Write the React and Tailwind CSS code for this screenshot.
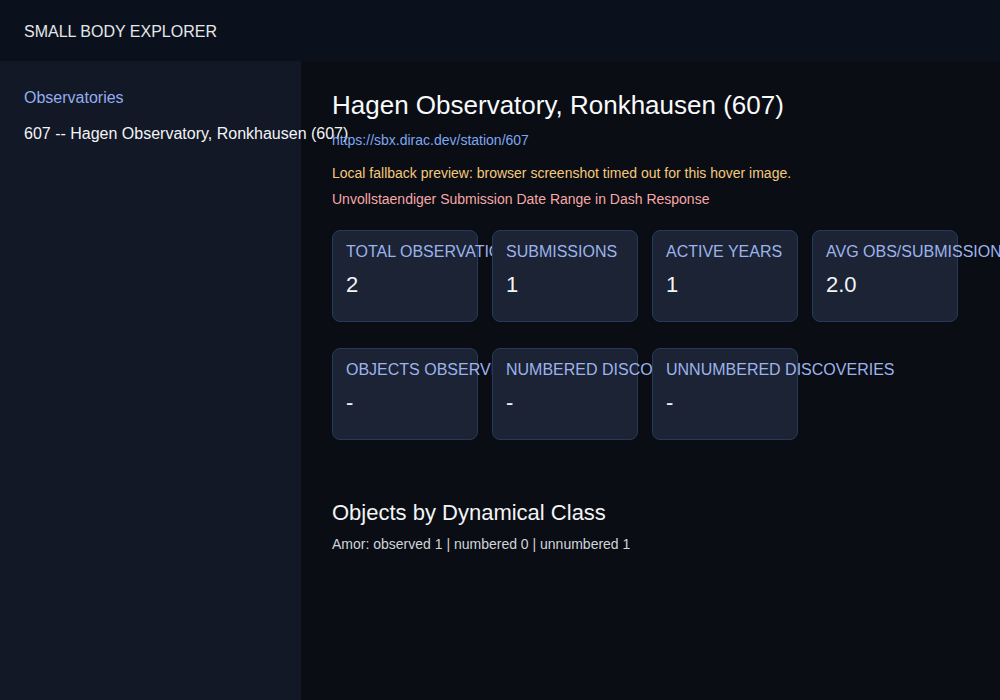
import React from 'react';

export default function App() {
  const row1 = [
    { label: 'TOTAL OBSERVATIONS', value: '2' },
    { label: 'SUBMISSIONS', value: '1' },
    { label: 'ACTIVE YEARS', value: '1' },
    { label: 'AVG OBS/SUBMISSION', value: '2.0' },
  ];
  const row2 = [
    { label: 'OBJECTS OBSERVED', value: '-' },
    { label: 'NUMBERED DISCOVERIES', value: '-' },
    { label: 'UNNUMBERED DISCOVERIES', value: '-' },
  ];

  const Card = ({ label, value }) => (
    <div className="w-[146px] h-[92px] shrink-0 rounded-lg border border-[#263a58] bg-[#1b2334] px-[13px] pt-[12px]">
      <div className="whitespace-nowrap text-[16px] leading-[18px] text-[#9db3ec]">{label}</div>
      <div className="mt-[11px] text-[22px] leading-[25px] text-[#f3f4f6]">{value}</div>
    </div>
  );

  return (
    <div className="flex h-[700px] flex-col bg-[#0a0d14] font-['Liberation_Sans',Arial,sans-serif]">
      {/* Header */}
      <header className="flex h-[61px] shrink-0 items-center bg-[#0b111c] px-6 pt-[3px]">
        <span className="text-[16px] text-[#e5e7eb]">SMALL BODY EXPLORER</span>
      </header>

      <div className="flex flex-1">
        {/* Sidebar */}
        <aside className="w-[301px] shrink-0 bg-[#121826] px-6 pt-[28px]">
          <div className="text-[16px] leading-[18px] text-[#93aef0]">Observatories</div>
          <div className="mt-[18px] whitespace-nowrap text-[16px] leading-[18px] text-[#f3f4f6]">
            607 -- Hagen Observatory, Ronkhausen (607)
          </div>
        </aside>

        {/* Main (no own bg so the sidebar's overflowing text stays visible) */}
        <main className="flex-1 pl-[31px] pt-[29px]">
          <h1 className="text-[26px] leading-[30px] text-[#f9fafb]">Hagen Observatory, Ronkhausen (607)</h1>
          <div className="mt-[12px] text-[14px] leading-[16px] text-[#7fa6f0]">https://sbx.dirac.dev/station/607</div>
          <div className="mt-[17px] text-[14px] leading-[16px] text-[#f5c97c]">
            Local fallback preview: browser screenshot timed out for this hover image.
          </div>
          <div className="mt-[10px] text-[14px] leading-[16px] text-[#f6a8a8]">
            Unvollstaendiger Submission Date Range in Dash Response
          </div>

          <div className="mt-[23px] flex gap-[14px]">
            {row1.map((c) => (
              <Card key={c.label} {...c} />
            ))}
          </div>
          <div className="mt-[26px] flex gap-[14px]">
            {row2.map((c) => (
              <Card key={c.label} {...c} />
            ))}
          </div>

          <h2 className="mt-[60px] text-[22px] leading-[25px] text-[#f3f4f6]">Objects by Dynamical Class</h2>
          <div className="mt-[11px] text-[14px] leading-[16px] text-[#d1d5db]">
            Amor: observed 1 | numbered 0 | unnumbered 1
          </div>
        </main>
      </div>
    </div>
  );
}
